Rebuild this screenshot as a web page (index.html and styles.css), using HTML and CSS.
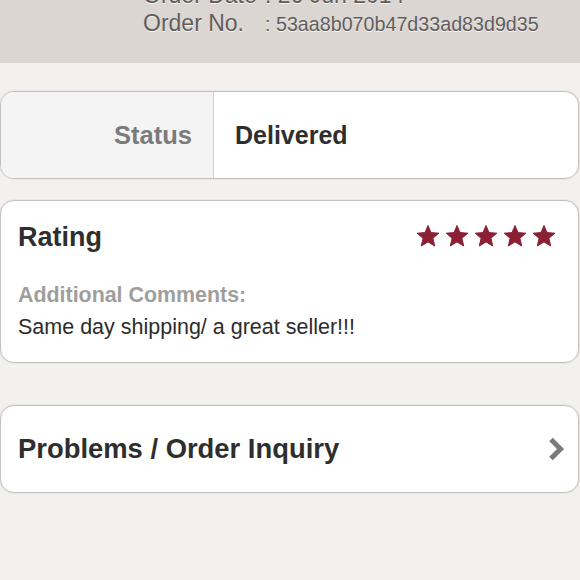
FILE: index.html
```html
<!DOCTYPE html>
<html lang="en">
<head>
<meta charset="utf-8">
<title>Order</title>
<link rel="stylesheet" href="styles.css">
</head>
<body>
<header class="order-head">
  <div class="order-meta">
    <span class="meta-label">Order Date</span><span class="meta-value meta-date">: 26 Jun 2014</span>
    <span class="meta-label">Order No.</span><span class="meta-value">: 53aa8b070b47d33ad83d9d35</span>
  </div>
</header>
<main class="content">
  <section class="card status-card">
    <div class="status-label">Status</div>
    <div class="status-value">Delivered</div>
  </section>
  <section class="card rating-card">
    <div class="rating-row">
      <h2 class="rating-title">Rating</h2>
      <div class="stars">
        <svg class="star" viewBox="0 0 24 24"><polygon points="12,1.5 15,8.6 22.8,9.2 16.9,14.3 18.7,22 12,17.9 5.3,22 7.1,14.3 1.2,9.2 9,8.6"/></svg>
        <svg class="star" viewBox="0 0 24 24"><polygon points="12,1.5 15,8.6 22.8,9.2 16.9,14.3 18.7,22 12,17.9 5.3,22 7.1,14.3 1.2,9.2 9,8.6"/></svg>
        <svg class="star" viewBox="0 0 24 24"><polygon points="12,1.5 15,8.6 22.8,9.2 16.9,14.3 18.7,22 12,17.9 5.3,22 7.1,14.3 1.2,9.2 9,8.6"/></svg>
        <svg class="star" viewBox="0 0 24 24"><polygon points="12,1.5 15,8.6 22.8,9.2 16.9,14.3 18.7,22 12,17.9 5.3,22 7.1,14.3 1.2,9.2 9,8.6"/></svg>
        <svg class="star" viewBox="0 0 24 24"><polygon points="12,1.5 15,8.6 22.8,9.2 16.9,14.3 18.7,22 12,17.9 5.3,22 7.1,14.3 1.2,9.2 9,8.6"/></svg>
      </div>
    </div>
    <div class="comments-label">Additional Comments:</div>
    <div class="comments-text">Same day shipping/ a great seller!!!</div>
  </section>
  <section class="card inquiry-card">
    <span class="inquiry-title">Problems / Order Inquiry</span>
    <svg class="chevron" viewBox="0 0 20 26"><polyline points="5,3.5 14.5,13 5,22.5"/></svg>
  </section>
</main>
</body>
</html>
```

FILE: styles.css
```css
* { box-sizing: border-box; }

html, body {
  margin: 0;
  padding: 0;
  background: #f3f1ed;
  font-family: "Liberation Sans", Arial, Helvetica, sans-serif;
  width: 580px;
  height: 580px;
  overflow: hidden;
}

.order-head {
  height: 63px;
  background: #dbd6d2;
  padding-left: 143px;
  overflow: hidden;
}

.order-meta {
  margin-top: -19px;
  display: grid;
  grid-template-columns: 122px auto;
  grid-auto-rows: 28px;
  align-items: baseline;
  color: #5f5d5c;
  text-shadow: 0 1px 0 rgba(255, 255, 255, 0.8);
}

.meta-label {
  font-size: 23px;
  line-height: 28px;
}

.meta-value {
  font-size: 19.7px;
  line-height: 28px;
}

.meta-date {
  font-size: 23px;
}

.content {
  display: flex;
  flex-direction: column;
  padding-top: 28px;
}

.card {
  background: #ffffff;
  border: 1px solid #c2c1bf;
  border-radius: 14px;
  box-shadow: 0 0 0 1px rgba(0, 0, 0, 0.04);
  margin-right: 1px;
}

.status-card {
  height: 88px;
  display: flex;
  overflow: hidden;
}

.status-label {
  width: 213px;
  background: #f4f4f4;
  border-right: 1px solid #cfcfcf;
  display: flex;
  align-items: center;
  justify-content: flex-end;
  padding-right: 21px;
  font-size: 25.5px;
  font-weight: bold;
  color: #7b7b7b;
}

.status-value {
  display: flex;
  align-items: center;
  padding-left: 21px;
  font-size: 25px;
  font-weight: bold;
  color: #2e2e2e;
}

.rating-card {
  margin-top: 21px;
  height: 163px;
  padding: 20px 22px 0 17px;
}

.rating-row {
  display: flex;
  align-items: center;
  justify-content: space-between;
  height: 32px;
}

.rating-title {
  margin: 0;
  font-size: 27px;
  line-height: 32px;
  font-weight: bold;
  color: #2e2e2e;
}

.stars {
  display: flex;
  gap: 5px;
  margin-top: -2px;
}

.star {
  width: 24px;
  height: 24px;
  display: block;
}

.star polygon {
  fill: #8a1f35;
  stroke: #8a1f35;
  stroke-width: 1;
  stroke-linejoin: round;
}

.comments-label {
  margin-top: 29px;
  font-size: 21.4px;
  line-height: 26px;
  font-weight: bold;
  color: #a09e9c;
}

.comments-text {
  margin-top: 6px;
  font-size: 21.5px;
  line-height: 26px;
  color: #2c2c2c;
}

.inquiry-card {
  margin-top: 42px;
  height: 88px;
  display: flex;
  align-items: center;
  justify-content: space-between;
  padding: 0 12px 0 17px;
}

.inquiry-title {
  font-size: 27.4px;
  font-weight: bold;
  color: #2e2e2e;
}

.chevron {
  width: 20px;
  height: 26px;
  display: block;
}

.chevron polyline {
  fill: none;
  stroke: #7a7a7a;
  stroke-width: 5;
  stroke-linejoin: miter;
}
```
